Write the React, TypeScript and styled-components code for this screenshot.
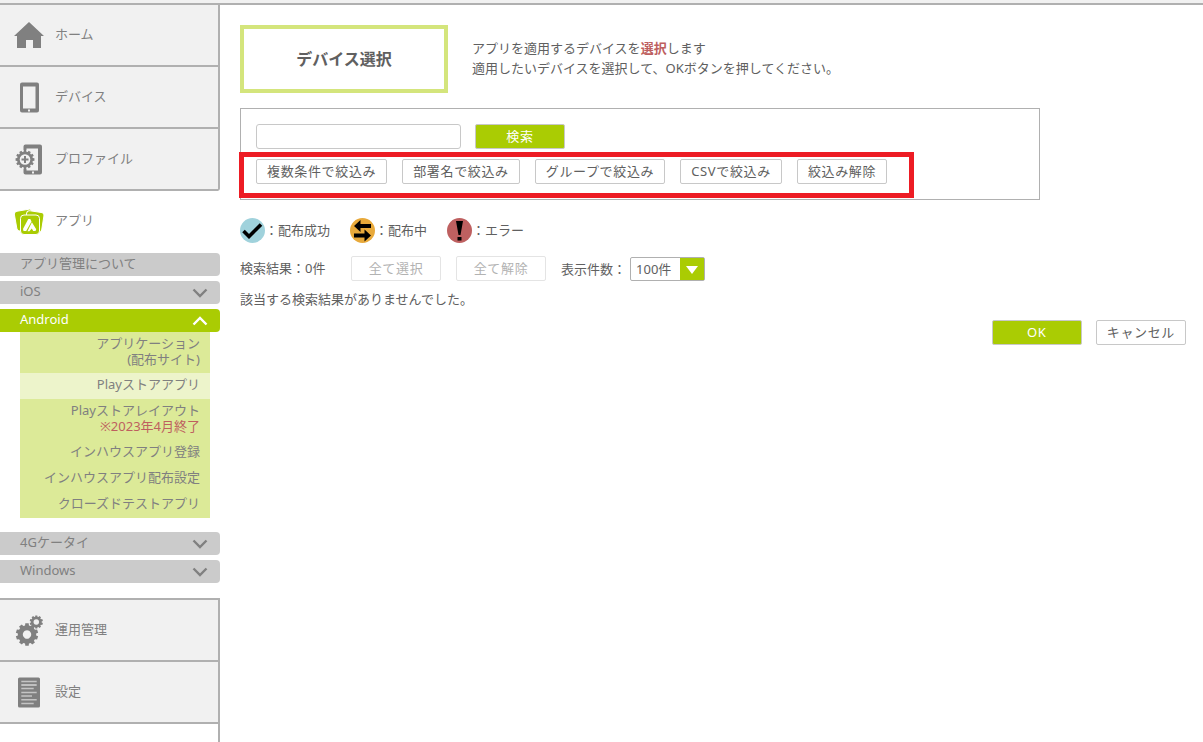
import React from 'react';
import styled, { createGlobalStyle, css } from 'styled-components';

const GREEN = '#aacc03';
const LINE = '#b0b0b0';
const ICON = '#808080';

const GlobalStyle = createGlobalStyle`
  *, *::before, *::after { box-sizing: border-box; }
  body {
    margin: 0;
    background: #fff;
    color: #606060;
    font-family: "Noto Sans", "Noto Sans CJK JP", sans-serif;
    font-size: 13px;
    line-height: 20px;
  }
  button, input, select { font: inherit; color: inherit; }
  p, h1, ul { margin: 0; padding: 0; }
  ul { list-style: none; }
  a { color: inherit; text-decoration: none; }
`;

const Page = styled.div`
  display: flex;
  flex-direction: column;
  min-height: 100vh;
`;

const TopBar = styled.header`
  height: 5px;
  background: #f1f1f1;
  border-bottom: 2px solid ${LINE};
`;

const Body = styled.div`
  display: flex;
  flex: 1;
`;

const Sidebar = styled.nav`
  display: flex;
  flex-direction: column;
  flex: none;
  width: 220px;
  color: ${ICON};
`;

const MenuBlock = styled.div<{ $first?: boolean }>`
  border-right: 2px solid ${LINE};
  ${({ $first }) =>
    $first
      ? css`border-bottom-right-radius: 3px;`
      : css`border-top: 2px solid ${LINE};`}
`;

const MenuLink = styled.a<{ $active?: boolean }>`
  display: flex;
  align-items: center;
  gap: 10px;
  height: 62px;
  padding: 0 14px 2px;
  background: ${({ $active }) => ($active ? '#fff' : '#f1f1f1')};
  border-bottom: 2px solid ${({ $active }) => ($active ? '#fff' : LINE)};

  svg { flex: none; margin-top: 2px; }
`;

const GroupList = styled.div`
  display: flex;
  flex-direction: column;
  gap: 5px;
  margin-bottom: 15px;
`;

const GroupHead = styled.a<{ $open?: boolean }>`
  display: flex;
  align-items: center;
  justify-content: space-between;
  height: 23px;
  padding: 0 12px 4px 20px;
  border-radius: 0 4px 4px 0;
  background: ${({ $open }) => ($open ? GREEN : '#cbcbcb')};
  color: ${({ $open }) => ($open ? '#fff' : ICON)};

  svg { margin-top: 4px; }
`;

const SubMenu = styled.ul`
  margin: 0 10px 9px 20px;
  background: #dcea98;
  text-align: right;
  line-height: 16px;
`;

const SubItem = styled.li<{ $active?: boolean }>`
  min-height: 26px;
  padding: 3px 10px 6px;
  background: ${({ $active }) => ($active ? '#edf4cb' : 'transparent')};
`;

const Ended = styled.span`
  display: block;
  color: #be5f5f;
`;

const Filler = styled.div`
  flex: 1;
  border-right: 2px solid ${LINE};
`;

const Main = styled.main`
  flex: 1;
  min-width: 0;
  padding: 20px 17px 20px 20px;
`;

const Intro = styled.div`
  display: flex;
  align-items: center;
  gap: 24px;
  margin-bottom: 15px;
`;

const Title = styled.h1`
  display: flex;
  align-items: center;
  justify-content: center;
  flex: none;
  width: 208px;
  height: 68px;
  border: 4px solid #d4e57c;
  font-size: 16px;
  font-weight: bold;
`;

const Lead = styled.p`
  padding-bottom: 2px;

  strong { color: #be5f5f; }
`;

const SearchPanel = styled.form`
  position: relative;
  display: flex;
  flex-direction: column;
  gap: 10px;
  max-width: 800px;
  margin-bottom: 17px;
  padding: 15px;
  border: 1px solid ${LINE};
`;

const Row = styled.div<{ $gap?: number }>`
  display: flex;
  align-items: center;
  gap: ${({ $gap = 14 }) => $gap}px;
`;

const SearchInput = styled.input`
  width: 205px;
  height: 25px;
  padding: 0 6px;
  border: 1px solid #c8c8c8;
  border-radius: 3px;
`;

const Button = styled.button<{ $primary?: boolean }>`
  min-width: 90px;
  height: 25px;
  padding: 0 10px 2px;
  border: 1px solid #c8c8c8;
  border-radius: 2px;
  background: ${({ $primary }) => ($primary ? GREEN : '#fff')};
  color: ${({ $primary }) => ($primary ? '#fff' : 'inherit')};
  line-height: 20px;
  letter-spacing: 0.05em;
  white-space: nowrap;

  &:disabled {
    border-color: #e4e4e4;
    color: #b2b2b2;
  }
`;

const Highlight = styled.div`
  position: absolute;
  top: 43px;
  left: -2px;
  width: 675px;
  height: 46px;
  border: 5px solid #ed1c24;
  pointer-events: none;
`;

const Legend = styled.ul`
  display: flex;
  gap: 20px;
  margin-bottom: 14px;

  li { display: flex; align-items: center; height: 25px; }
  svg { margin-top: 2px; }
`;

const ResultRow = styled(Row)`
  margin-bottom: 8px;
`;

const Count = styled.span`
  width: 96px;
  padding-bottom: 2px;
`;

const PageSize = styled.label`
  display: flex;
  align-items: center;
  gap: 4px;
`;

const SelectBox = styled.span`
  position: relative;
  display: flex;

  svg {
    position: absolute;
    top: 1px;
    right: 1px;
    pointer-events: none;
  }
`;

const Select = styled.select`
  appearance: none;
  width: 75px;
  height: 24px;
  padding: 0 5px;
  border: 1px solid ${LINE};
  border-radius: 2px;
  background: #fff;
`;

const Actions = styled(Row)`
  justify-content: flex-end;
  margin-top: 11px;
`;

const Svg = ({ children }: { children: React.ReactNode }) => (
  <svg width="31" height="31" viewBox="0 0 31 31" fill={ICON} aria-hidden="true">
    {children}
  </svg>
);

const gearPath = (cx: number, cy: number, inner: number, outer: number, teeth: number) => {
  const pts: string[] = [];
  const step = (Math.PI * 2) / teeth;
  for (let i = 0; i < teeth; i++) {
    const a = i * step - Math.PI / 2;
    [[-0.34, inner], [-0.24, outer], [0.24, outer], [0.34, inner]].forEach(([k, r]) => {
      pts.push(`${(cx + Math.cos(a + k * step) * r).toFixed(2)} ${(cy + Math.sin(a + k * step) * r).toFixed(2)}`);
    });
  }
  return `M${pts.join('L')}Z`;
};

const HomeIcon = () => (
  <Svg>
    <path d="M15 2 30 16h-3v12h-8v-8h-7v8H3V16H0Z" />
  </Svg>
);

const DeviceIcon = () => (
  <Svg>
    <path fillRule="evenodd" d="M8 .5h15a2 2 0 0 1 2 2v26a2 2 0 0 1-2 2H8a2 2 0 0 1-2-2v-26a2 2 0 0 1 2-2ZM9 4.500v22h12.500v-22Z" />
    <rect x="14" y="27.500" width="2" height="2" fill="#f1f1f1" />
  </Svg>
);

const ProfileIcon = () => (
  <Svg>
    <path d="M11.500 .5H26a2 2 0 0 1 2 2v26a2 2 0 0 1-2 2H11.500a2 2 0 0 1-2-2V25h3v1.500H24v-22H12.500V6h-3V2.500a2 2 0 0 1 2-2Z" />
    <rect x="18" y="27.500" width="2" height="2" fill="#f1f1f1" />
    <path d={gearPath(11, 15.5, 7.9, 9.5, 12)} />
    <circle cx="11" cy="15.500" r="5.300" fill="#f1f1f1" />
    <path d="M10 12h2v2.500h2.500v2H12V19h-2v-2.500H7.500v-2H10Z" />
  </Svg>
);

const AppIcon = () => (
  <Svg>
    <g fill={GREEN} stroke="#fff" strokeWidth="1">
      <rect x="1.500" y="4" width="18" height="20" rx="3" transform="rotate(-10 11 14)" />
      <rect x="11.500" y="5.500" width="17.500" height="20" rx="3" transform="rotate(9 20 15)" />
      <rect x="6.500" y="9" width="19" height="19.500" rx="3.500" />
    </g>
    <g fill="#fff">
      <path d="M14.300 13h2l1.200 2.500-5.300 9.500H9.500L9 23Z" />
      <path d="m17.900 16.300 4.300 6.900-.7 1.800h-2.300l-1.400-2.600-2.400 2.800h-1.900Z" />
    </g>
  </Svg>
);

const GearsIcon = () => (
  <Svg>
    <path fillRule="evenodd" d={`${gearPath(13, 19.5, 9.2, 11.3, 10)}M13 15.300a4.200 4.200 0 1 0 .01 0Z`} />
    <path fillRule="evenodd" d={`${gearPath(22.3, 7, 5.4, 6.7, 10)}M22.300 4.200a2.800 2.800 0 1 0 .01 0Z`} />
  </Svg>
);

const SettingsIcon = () => (
  <Svg>
    <rect x="4" y="0.500" width="22" height="30" rx="1.500" />
    <g stroke="#c4c4c4" strokeWidth="1.600">
      <path d="M7.300 4.500h15.400M7.300 11.500h12.400M7.300 15.500h15.400M7.300 19h10.700M7.300 22.700h15.400M7.300 26.500h12.400" />
      <path d="M7.300 8h15.400" stroke="#fff" strokeWidth="1" />
    </g>
  </Svg>
);

const Chevron = ({ up }: { up?: boolean }) => (
  <svg width="16" height="10" viewBox="0 0 16 10" fill="none" stroke="currentColor" strokeWidth="2.400" aria-hidden="true">
    <path d={up ? 'M1.500 8.500 8 2l6.500 6.500' : 'M1.500 1.500 8 8l6.500-6.500'} />
  </svg>
);

const StatusIcon = ({ fill, children }: { fill: string; children: React.ReactNode }) => (
  <svg width="25" height="25" viewBox="0 0 25 25" aria-hidden="true">
    <circle cx="12.500" cy="12.500" r="12.500" fill={fill} />
    {children}
  </svg>
);

export default function App() {
  return (
    <Page>
      <GlobalStyle />
      <TopBar />
      <Body>
        <Sidebar>
          <MenuBlock $first>
            <MenuLink href="#home"><HomeIcon />ホーム</MenuLink>
            <MenuLink href="#device"><DeviceIcon />デバイス</MenuLink>
            <MenuLink href="#profile"><ProfileIcon />プロファイル</MenuLink>
          </MenuBlock>
          <MenuLink href="#app" $active><AppIcon />アプリ</MenuLink>
          <GroupList>
            <GroupHead href="#about">アプリ管理について</GroupHead>
            <GroupHead href="#ios">iOS<Chevron /></GroupHead>
            <div>
              <GroupHead href="#android" $open>Android<Chevron up /></GroupHead>
              <SubMenu>
                <SubItem><a href="#application">アプリケーション<br />(配布サイト)</a></SubItem>
                <SubItem $active><a href="#play">Playストアアプリ</a></SubItem>
                <SubItem><a href="#layout">Playストアレイアウト<Ended>※2023年4月終了</Ended></a></SubItem>
                <SubItem><a href="#inhouse">インハウスアプリ登録</a></SubItem>
                <SubItem><a href="#delivery">インハウスアプリ配布設定</a></SubItem>
                <SubItem><a href="#closed">クローズドテストアプリ</a></SubItem>
              </SubMenu>
            </div>
            <GroupHead href="#4g">4Gケータイ<Chevron /></GroupHead>
            <GroupHead href="#windows">Windows<Chevron /></GroupHead>
          </GroupList>
          <MenuBlock>
            <MenuLink href="#operation"><GearsIcon />運用管理</MenuLink>
            <MenuLink href="#settings"><SettingsIcon />設定</MenuLink>
          </MenuBlock>
          <Filler />
        </Sidebar>
        <Main>
          <Intro>
            <Title>デバイス選択</Title>
            <Lead>
              アプリを適用するデバイスを<strong>選択</strong>します<br />
              適用したいデバイスを選択して、OKボタンを押してください。
            </Lead>
          </Intro>
          <SearchPanel>
            <Row>
              <SearchInput type="text" aria-label="検索" />
              <Button type="button" $primary>検索</Button>
            </Row>
            <Row $gap={15}>
              <Button type="button">複数条件で絞込み</Button>
              <Button type="button">部署名で絞込み</Button>
              <Button type="button">グループで絞込み</Button>
              <Button type="button">CSVで絞込み</Button>
              <Button type="button">絞込み解除</Button>
            </Row>
            <Highlight />
          </SearchPanel>
          <Legend>
            <li>
              <StatusIcon fill="#a0d2dc">
                <path d="m3.500 13 5.500 5.500L21 6.500" fill="none" stroke="#000" strokeWidth="3.600" />
              </StatusIcon>
              ：配布成功
            </li>
            <li>
              <StatusIcon fill="#e8a93a">
                <path d="M4 8l6.500-6v4H21v4H10.500v4ZM21 17.500l-6.500 6v-4H4v-4h10.500v-4Z" />
              </StatusIcon>
              ：配布中
            </li>
            <li>
              <StatusIcon fill="#be6060">
                <path d="M9 3h7l-2.500 14h-2ZM10.500 19h4v3.500h-4Z" />
              </StatusIcon>
              ：エラー
            </li>
          </Legend>
          <ResultRow $gap={15}>
            <Count>検索結果：0件</Count>
            <Button type="button" disabled>全て選択</Button>
            <Button type="button" disabled>全て解除</Button>
            <PageSize>
              表示件数：
              <SelectBox>
                <Select defaultValue="100">
                  <option value="100">100件</option>
                </Select>
                <svg width="24" height="22" viewBox="0 0 24 22" aria-hidden="true">
                  <path fill={GREEN} d="M0 0h24v22H0Z" />
                  <path fill="#fff" d="M6 8h12l-6 8Z" />
                </svg>
              </SelectBox>
            </PageSize>
          </ResultRow>
          <p>該当する検索結果がありませんでした。</p>
          <Actions>
            <Button type="button" $primary>OK</Button>
            <Button type="button">キャンセル</Button>
          </Actions>
        </Main>
      </Body>
    </Page>
  );
}
